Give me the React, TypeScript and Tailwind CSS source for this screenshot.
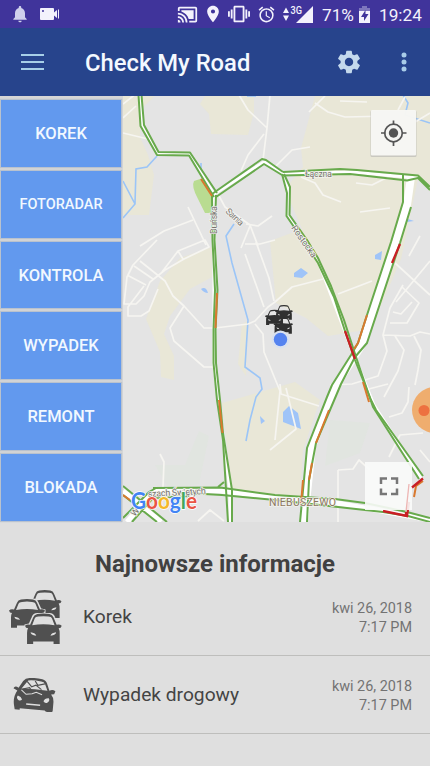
import { MdNotifications, MdVideocam, MdCastConnected, MdLocationOn, MdVibration, MdAlarm, MdSettings } from "react-icons/md";

const GREEN = "#68aa4c";

function StatusBar() {
  return (
    <div className="flex h-[28px] shrink-0 items-center bg-[#40349b] text-[#f3f2fc]">
      <MdNotifications className="ml-[10px] h-[20px] w-[20px] text-[#cfd0ec]" />
      <svg className="ml-[10px] h-[14px] w-[19px]" viewBox="0 0 19 14" fill="currentColor">
        <path fillRule="evenodd" d="M1 1h12q1 0 1 1v10q0 1-1 1H1q-1 0-1-1V2q0-1 1-1m2 2a1 1 0 1 0 0 2 1 1 0 0 0 0-2" />
        <path d="M14 5.500 17 3v8l-3-2.500zM18 2.500h1v9h-1z" />
      </svg>
      <MdCastConnected className="ml-[118px] h-[21px] w-[21px]" />
      <MdLocationOn className="ml-[5px] h-[20px] w-[20px]" />
      <MdVibration className="ml-[5px] h-[22px] w-[22px]" />
      <MdAlarm className="ml-[7px] h-[19px] w-[19px]" />
      <svg className="ml-[6px] h-[20px] w-[32px]" viewBox="0 0 32 20">
        <path d="M4 3.500 7 9H1zM4 17 1 11.500h6zM31 2v17H14z" fill="currentColor" />
        <path d="M9 0h11.500v11H9z" fill="#40349b" />
        <text x="8.500" y="9.500" fontSize="10" fontWeight="500" fontFamily="Roboto" fill="currentColor" textLength="11.500" lengthAdjust="spacingAndGlyphs">3G</text>
      </svg>
      <span className="ml-[8px] w-[32px] pt-[2px] text-[17.200px] leading-[28px] whitespace-nowrap">71%</span>
      <svg className="ml-[5px] h-[17px] w-[11px]" viewBox="0 0 11 17">
        <path d="M3 0h5v2h3v5H0V2h3z" fill="#7d76bd" />
        <path d="M0 5h11v12H0z" fill="currentColor" />
        <path d="M6.500 4 2 11h3v4l4.500-7h-3z" fill="#40349b" />
      </svg>
      <span className="ml-[9px] pt-[2px] text-[17.200px] leading-[28px]">19:24</span>
    </div>
  );
}

function AppBar() {
  return (
    <header className="flex h-[68px] shrink-0 items-center bg-[#27448c] text-[#f4f9ff]">
      <svg className="ml-[21px] h-[18px] w-[23px]" viewBox="0 0 23 18">
        <path d="M0 2h23M0 9h23M0 16h23" stroke="#a7cfe8" strokeWidth="1.800" />
      </svg>
      <h1 className="ml-[41px] flex-1 pt-[2px] text-[23.800px] leading-[66px] font-medium">Check My Road</h1>
      <MdSettings className="h-[28px] w-[28px] text-[#c4d9ed]" />
      <svg className="mr-[22px] ml-[37px] h-[22px] w-[8px]" viewBox="0 0 8 22" fill="#a9cce8">
        <circle cx="4" cy="4" r="2.500" />
        <circle cx="4" cy="11" r="2.500" />
        <circle cx="4" cy="18" r="2.500" />
      </svg>
    </header>
  );
}

const BUTTONS = [
  { label: "KOREK", size: "text-[16.500px]" },
  { label: "FOTORADAR", size: "text-[14.500px]" },
  { label: "KONTROLA", size: "text-[16.500px]" },
  { label: "WYPADEK", size: "text-[16.500px]" },
  { label: "REMONT", size: "text-[16.500px]" },
  { label: "BLOKADA", size: "text-[16.500px]" },
];

function CarShape({ halo }: { halo: string }) {
  return (
    <g>
      <path d="M1 12 5 11 8 4Q9 1 12 1h12q3 0 4 3l3 7 4 1v3h-2l1 3v12h-6v-4H8v4H2V18l1-3H1z" fill={halo} stroke={halo} strokeWidth="3" />
      <path fillRule="evenodd" d="M0 12q2-2 5-1l3-7q1-3 4-3.500 6-1 12 0 3 .5 4 3.500l3 7q3-1 5 1l-1 2-2 .5q1 2 1 5V30h-6v-2.500H8V30H2V19q0-3 1-4.500L1 14zM7 11.500q11-2 22 0l-2.500-6.500Q26 3 23 3q-5-.7-10 0-3 0-3.500 2zM5.500 18.500q0 3 5.500 3.200-1-2.600-5.500-3.200m25 0q-4.500.6-5.500 3.200 5.500-.2 5.500-3.200" />
    </g>
  );
}

function TrafficCars({ fill, halo }: { fill: string; halo: string }) {
  return (
    <g fill={fill}>
      <g transform="translate(19 0) scale(.93)"><CarShape halo={halo} /></g>
      <g transform="translate(0 9) scale(1 .96)"><CarShape halo={halo} /></g>
      <g transform="translate(16 23.500) scale(1.020)"><CarShape halo={halo} /></g>
    </g>
  );
}

const LOCAL_ROADS = [
  "M123 104 137 93M123 118 136 106M123 133 148 139",
  "M239 95 248 110 267 128 263 160M267 128 270 95M264 134 248 155 241 171",
  "M309 112 325 96M315 103 328 112 345 117 390 116M385 151 402 130 430 113M340 101 367 102M301 177 315 183 323 195 341 202",
  "M356 183 372 185 390 176M218 194 225 207 250 225 258 246M188 207 206 245M193 220 164 231 140 246",
  "M250 226 241 248M272 216 258 226 246 224",
  "M157 240 133 265 127 277 124 304 136 304 144 296 150 282 165 270 184 259 209 247 205 240 178 251 162 272M140 261 165 281 173 296 184 306 204 328 214 328M127 275 146 285M134 266 153 279M144 286 128 307V316H141L149 311 158 289M184 306 170 328 174 341 204 367 213 367M178 251 183 259",
  "M215 328 248 324 255 321 268 307 275 302 292 287 323 279M255 324 263 334 264 352 280 391 275 440",
  "M245 244 260 244 275 240M245 254 264 307M256 242 269 278 274 301M338 294 372 281M395 263 430 295M396 302 430 261M402 287 419 303 407 323 390 323M412 302 401 314 393 312M403 285 390 308 383 335 387 351 378 376 352 384 330 385M383 335 410 336 420 332 430 334M395 336 404 350 398 371 384 397M414 336 421 350 418 370 415 385",
  "M280 384 281 394 319 406M374 407 365 390 388 384M389 417 402 413 408 402 409 387M423 433 400 435 389 457M420 450 430 462M338 470 338 522M338 470 353 469 359 460 370 470M160 454 164 462 163 487M198 521 210 510 224 521M405 97 398 110",
  "M286 388 296 429 270 450M275 167 292 150 310 147M390 208 360 212M409 256 420 236",
];

const TRAFFIC = [
  "M138.500 95 140.500 126 157 155 189 155.500 214 197M141.500 95 144 125 158.500 152 190 152.500 217 193",
  "M212 194 262 159 266 160 283 172M216 197 264 164 282 175",
  "M283 172 340 169 357 170 418 175.500 430 187M282 175.500 350 174 407 180.500 418 178 430 190",
  "M282 174 287 193 286.500 216 303 240 318 263 334 297 345 331 355 360 371 400 376 410 423 476",
  "M284 174 290 187 289.500 215 307 240 318 258 331 286 344 320 357 360 373 407 419 479",
  "M212 195 212.500 240 215 290 213.500 330 213.500 363 217 400 223 440 228 522",
  "M216 195 214.500 240 217.500 290 215.500 330 216 363 220 400 223 433 232 490 232 522",
  "M403 175 403 202 391 242 367 315 358 343 351 355 332 385 327 397 307 448 300 522",
  "M411 207 400 243 367 343 355 357 341 384 316 443 309 480 307 522",
  "M153 488 220 487.500 275 495 335 499 365 503 407 512 430 518M187 493 222 495 275 500 338 507 383 512 408 516 430 522",
  "M123 486 167 522M123 495 157 522M123 518 149 492 156 488M132 522 153 498 190 496M218 487 224 482",
];

function RoadMap() {
  return (
    <svg className="h-[426px] w-[307px] shrink-0" viewBox="123 96 307 426" fill="none">
      <path d="M123 96h307v426H123z" fill="#e4e4e4" />
      <g fill="#e9e7d7">
        <path d="M123 96h32l-15 14v27l8 18 6 20-5 40h-26z" />
        <path d="M205 96h49v16l-6 23-37-1-2-20-9-10z" />
        <path d="M315 96h115v95l-12-12-17 80-30 70-43 7-22-18-30-15-6-62 32-12-17-40 18-22-2-19z" />
        <path d="M212 247v30l-22 12-20 27-6 18 10 22v24l-13-3-1-25-14-33 14-38 20-23z" />
        <path d="M222 403 295 382 320 400 303 450 300 497 232 490z" />
        <path d="m242 324 6-3-2 55-8-12z" />
      </g>
      <path d="m194 181 12-4 6 16v20h-7l-7-14q-7-13-4-18" fill="#b9dc91" />
      <path d="M155 465h30l14-34 10 5-10 48-30 5zM330 420l40 3-10 30-35 13z" fill="#e1e5e0" />
      <g fill="#9fc4f8">
        <path d="m294 273 7-5 7 5-6 5-8-1zM375 255l7-4-1 9-6-1zM201 289q5-3 7 4-4 0-7-4zM283 412l6-6 9 7 3 16-18-7zM260 416l5 5-4 3zM408 219l6 2-7 1z" />
      </g>
      <g stroke="#9bc5f7" strokeWidth="1.600">
        <path d="M157 156 147 167 136 169 135 204 123 218M123 181 135 204M201 163V173M234 224 226 236 232 263 248 320 245 367 260 378 262 389 256 397 250 420 246 441M247 96h9M403 95l5 8-3 12 25 8" />
      </g>
      <g stroke="#f6f5f1" strokeWidth="1.700" strokeLinejoin="round">
        {LOCAL_ROADS.map((d) => <path key={d} d={d} />)}
      </g>
      <g stroke="#fff" strokeLinejoin="round">
        <path d="M411 177 407 205 396 242 368 325 361 346 336 385 312 446 304 522" strokeWidth="8" />
        <path d="M123 491 161 522M127 522 154 491 220 491 275 497 337 503 430 520" strokeWidth="5" />
        <path d="M140 96 142 126 158 154 189 154 214 194 264 162 283 174 352 172 418 178M283 174 288 190 288 215 318 261 350 345 374 405 421 478M214 194V310L214 365 230 490V522" strokeWidth="3" />
      </g>
      <g stroke={GREEN} strokeWidth="2" strokeLinejoin="round">
        {TRAFFIC.map((d) => <path key={d} d={d} />)}
      </g>
      <g stroke="#d9792f" strokeWidth="2">
        <path d="M201 179 212 196M217 293 215.500 328M219 400 222.500 433M367 315 358 343 354 349M329 410 316 443M312 463 309 480M303 480 301 504M363 382 369 402M423 481 416 486 414 497M123 495 130 500" />
      </g>
      <path d="M400 244 392 263M345 331 355 359M383 511 407 516 409 502" stroke="#c91f25" strokeWidth="2.300" />
      <g fontFamily="Roboto, sans-serif" fill="#77736d" stroke="#f2f2ee" strokeWidth="1.500" paintOrder="stroke" fontSize="9">
        <text x="305" y="177" textLength="27">Łączna</text>
        <text transform="translate(217 234) rotate(-90)" textLength="28">Duńska</text>
        <text transform="translate(225 212) rotate(43)" textLength="21">Sarnia</text>
        <text transform="translate(291 228) rotate(55)" textLength="37">Rostocka</text>
        <text transform="translate(135 517) rotate(-52)">W</text>
        <text transform="translate(148 497) rotate(-3)" textLength="58">szach Świętych</text>
        <text x="269" y="506" fontSize="10.500" fill="#8b765d" textLength="67">NIEBUSZEWO</text>
      </g>
      <text x="131" y="508.500" fontFamily="Lato, sans-serif" fontWeight="700" fontSize="23.500" textLength="66" lengthAdjust="spacingAndGlyphs" stroke="#fff" strokeWidth="1.500" paintOrder="stroke">
        <tspan fill="#4284f4">G</tspan><tspan fill="#ea5545">o</tspan><tspan fill="#f4b82a">o</tspan><tspan fill="#4284f4">g</tspan><tspan fill="#42a85b">l</tspan><tspan fill="#ea5545">e</tspan>
      </text>
      <g transform="translate(265 305) scale(.53)">
        <TrafficCars fill="#303030" halo="none" />
      </g>
      <circle cx="280.500" cy="339.500" r="9" fill="#d9e1ef" />
      <circle cx="280.500" cy="339.500" r="6.700" fill="#5583ef" />
      <rect x="370.500" y="110.500" width="46" height="46.500" rx="1.500" fill="#aaa" opacity=".5" />
      <rect x="371" y="110" width="45" height="45.500" rx="1" fill="#f8f8f5" opacity=".96" />
      <circle cx="393.500" cy="133" r="8.800" stroke="#555" strokeWidth="1.700" />
      <circle cx="393.500" cy="133" r="4.700" fill="#555" />
      <path d="M393.500 120.500v4.500M393.500 141.500v4.500M381 133h4.500M402 133h4.500" stroke="#555" strokeWidth="1.700" />
      <path d="M365 462h47v48h-47z" fill="#fafbf9" opacity=".9" />
      <path d="M409 484 406 512" stroke="#edb5b3" strokeWidth="1.300" />
      <path d="M423 478.500 412 487.500M406 512v4" stroke="#c91f25" strokeWidth="2.300" />
      <path d="M381 484v-5.500h6M391 478.500h6v5.500M397 488.500v5.500h-6M387 494h-6v-5.500" stroke="#777" strokeWidth="2.500" />
      <circle cx="435" cy="410" r="23" fill="#f1a359" opacity=".85" />
      <circle cx="424" cy="410.500" r="5.500" fill="#ed7140" />
    </svg>
  );
}

function CrashedCar() {
  return (
    <svg className="h-[34px] w-[44px]" viewBox="0 0 44 34">
      <g transform="rotate(5 22 17)">
        <path fill="#505050" fillRule="evenodd" d="M1 12q1-3 5-1l4-7q2-3 6-3.500 7-1 13 0 4 1 5 4l3 7q3-2 6 0l-1 3-3 .5q3 3 3 8v8q0 2-3 2-4 0-5-1.500H9V33H4l-1-4q-2-8 2-15zM9 11.500q14-1 26 0l-3-6.500q-1-2-4-2-7-1-13 0zM6 19a2.500 2.500 0 1 0 4.500 3.500Q9.500 20 6 19m31 0q-4 0-5 3.500A2.500 2.500 0 1 0 37 19M15 26v1.500h14V26z" />
        <path d="m14 4 5 5 4-2 6 4M22 3l3 4 7-2M10 12l7-2 3 4 10 0" stroke="#505050" strokeWidth="1.200" fill="none" />
        <path d="m9 13 5 4 6-1 4-2 6 2" stroke="#dfdfdf" fill="none" />
      </g>
    </svg>
  );
}

function Row({ title, crash }: { title: string; crash?: boolean }) {
  return (
    <li className="flex h-[78px] items-center border-b border-[#bebebc]">
      <div className="flex w-[83px] shrink-0 items-center">
        {crash ? (
          <div className="ml-[12px] pt-px"><CrashedCar /></div>
        ) : (
          <svg className="ml-[9px] mt-[2px] h-[55px] w-[54px]" viewBox="0 0 54 55"><TrafficCars fill="#505050" halo="#dfdfdf" /></svg>
        )}
      </div>
      <span className="flex-1 pt-[2px] text-[19.200px] text-[#444]">{title}</span>
      <div className="mr-[18px] pt-[3px] text-right text-[14.400px] leading-[19.500px] text-[#737373]">
        <p>kwi 26, 2018</p>
        <p>7:17 PM</p>
      </div>
    </li>
  );
}

export default function App() {
  return (
    <div className="flex h-[766px] w-[430px] flex-col overflow-hidden bg-[#dfdfdf] font-['Roboto',sans-serif]">
      <StatusBar />
      <AppBar />
      <main className="flex h-[426px] shrink-0">
        <nav className="flex w-[123px] shrink-0 flex-col gap-[4px] bg-[#d6d6d6] pt-[4px] pr-[2px] pl-px">
          {BUTTONS.map((b) => (
            <button key={b.label} className={`h-[66.800px] w-full shrink-0 bg-[#6299ee] pt-[2px] font-medium text-[#f1f8ff] shadow-[0_0_1px_1px_#b9c2ce] ${b.size}`}>
              {b.label}
            </button>
          ))}
        </nav>
        <RoadMap />
      </main>
      <section>
        <h2 className="h-[56px] pt-[25px] text-center text-[24px] leading-[34px] font-bold text-[#414141]">Najnowsze informacje</h2>
        <ul>
          <Row title="Korek" />
          <Row title="Wypadek drogowy" crash />
        </ul>
      </section>
    </div>
  );
}
